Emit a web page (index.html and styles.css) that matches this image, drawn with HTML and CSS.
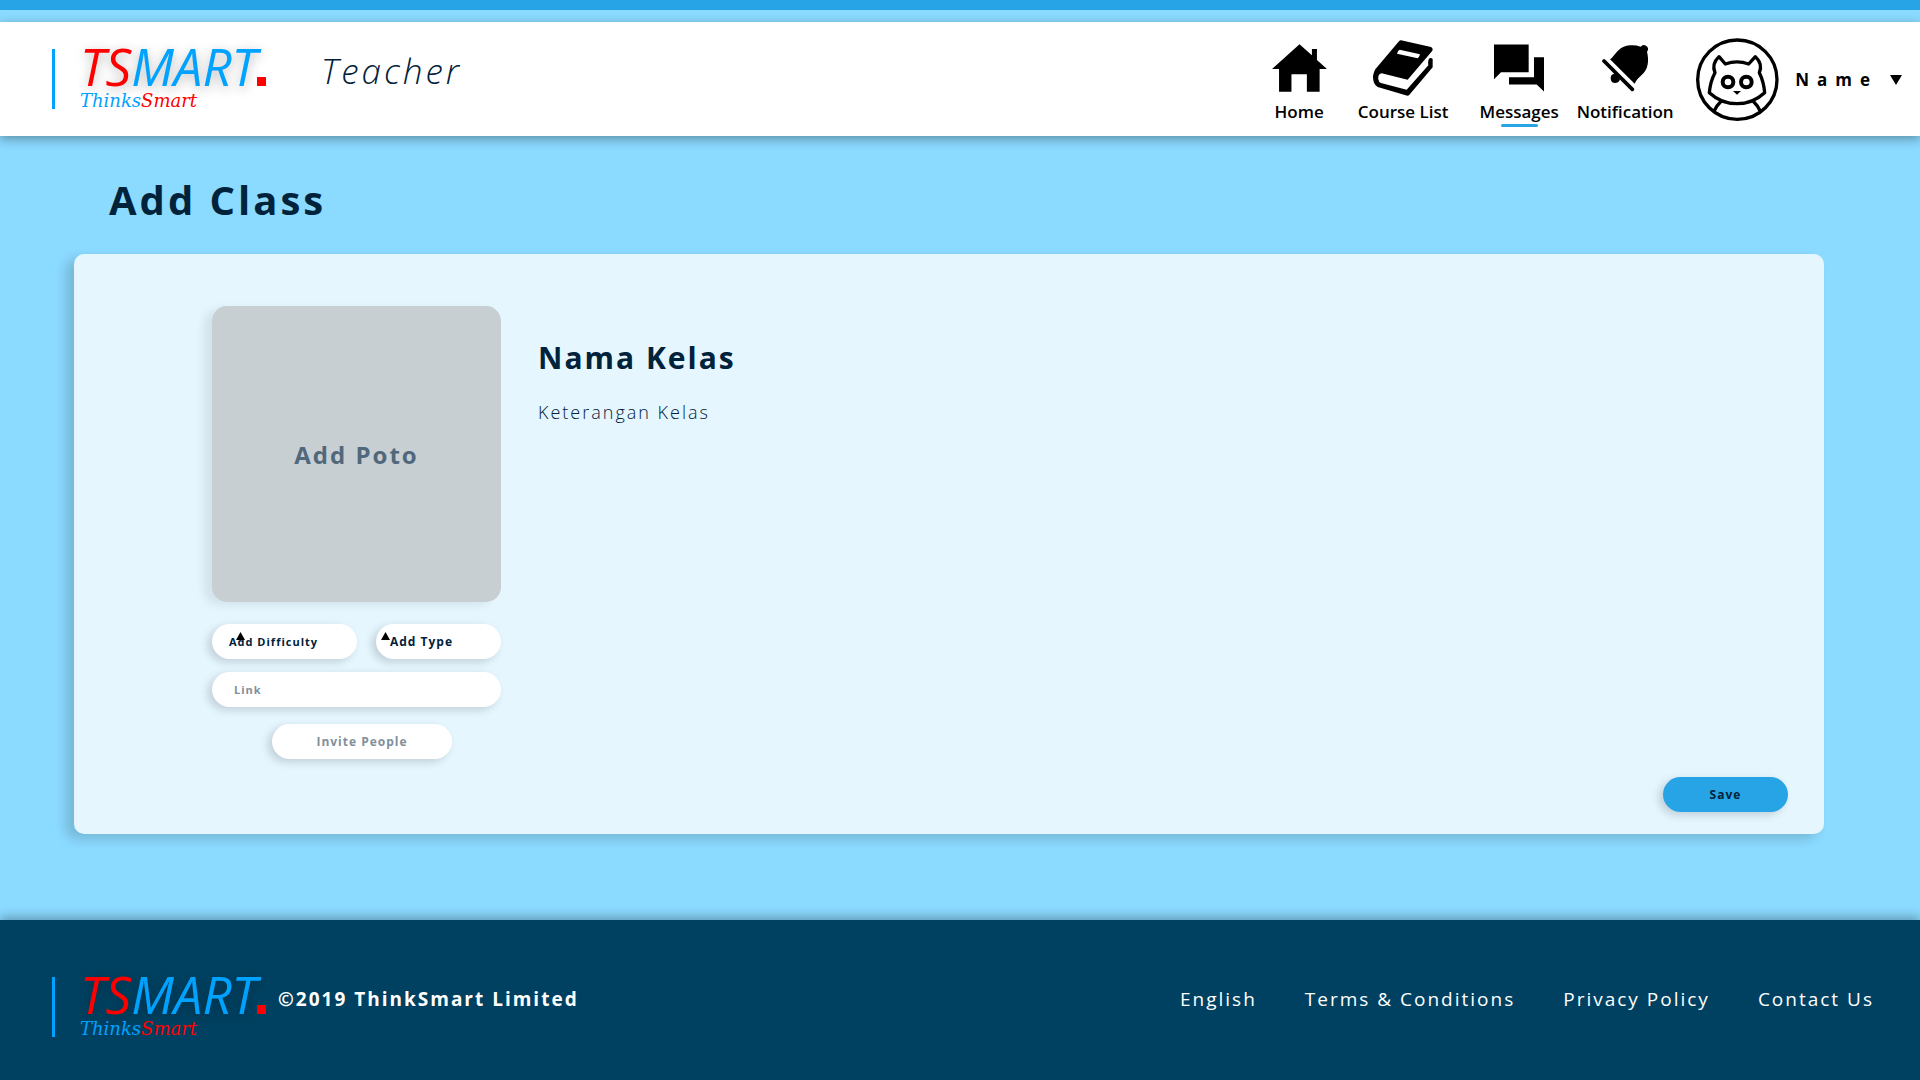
FILE: index.html
```html
<!DOCTYPE html>
<html lang="id">
<head>
<meta charset="utf-8">
<meta name="viewport" content="width=device-width, initial-scale=1">
<title>TSMART - Add Class</title>
<link rel="stylesheet" href="styles.css">
</head>
<body>
<header class="header">
  <a class="logo" href="#">
    <span class="logo-name"><span class="red">TS</span>MART<span class="logo-dot"></span></span>
    <span class="logo-sub">Thinks<span class="red">Smart</span></span>
  </a>
  <span class="role">Teacher</span>
  <nav class="nav">
    <a class="nav-item" href="#">
      <svg class="nav-icon" width="55" height="47" viewBox="0 0 164 142"><path d="M82 0 119 33V14h15v33l30 27h-22v68h-38V90H58v52H21V74H0z"/></svg>
      <span>Home</span>
    </a>
    <a class="nav-item" href="#">
      <svg class="nav-icon" width="60" height="56" viewBox="0 0 180 168"><path fill-rule="evenodd" d="M84 1 174 21Q181 24 178 32L104 119 26 100Q14 102 16 118 17 127 24 129L101 149 166 76Q164 62 168 56 174 52 179 57V82L108 166Q104 168 98 166L14 141Q0 133 0 110 2 92 12 82L76 6Q80 0 84 1ZM80 29Q75 30 72 41L134 55Q139 52 141 43Z"/></svg>
      <span>Course List</span>
    </a>
    <a class="nav-item active" href="#">
      <svg class="nav-icon" width="50" height="47" viewBox="0 0 150 141"><path d="M0 0h104v83H21L0 104zM120 38h30v103l-22-21H45V98h75z"/></svg>
      <span>Messages</span>
    </a>
    <a class="nav-item" href="#">
      <svg class="nav-icon" width="46" height="46" viewBox="0 0 138 138"><path d="M24 43C40 35 44 5 85 1Q102 0 116 5A11 11 0 1 1 135 20Q140 40 137 58C133 88 106 95 98 116z"/><path d="M38 84 54 100A14 14 0 1 1 38 86z"/><path d="M6 48 91 133" stroke="#000" stroke-width="11" stroke-linecap="round"/></svg>
      <span>Notification</span>
    </a>
  </nav>
  <button class="profile" type="button">
    <svg width="83" height="83" viewBox="0 0 249 249" fill="none" stroke="#000" stroke-width="10" stroke-linejoin="round"><circle cx="124" cy="125" r="119"/><path d="M69 56 88 78Q123 65 158 78L178 56Q201 78 190 104 203 130 206 164 170 197 123 197 76 197 40 164 43 130 57 104 46 78 69 56Z"/><circle cx="96" cy="132" r="16" stroke-width="12"/><circle cx="151" cy="132" r="16" stroke-width="12"/><path d="M111 159h24l-12 11z" fill="#000" stroke="none"/><path d="M76 189Q63 201 54 220M171 189Q184 201 193 220"/></svg>
    <span class="profile-name">Name</span>
    <svg width="12" height="10" viewBox="0 0 12 10"><path d="M0 0h12L6 10z"/></svg>
  </button>
</header>

<main class="main">
  <h1 class="title">Add Class</h1>
  <form class="panel">
    <div class="panel-body">
      <div class="media">
        <button class="photo" type="button">Add Poto</button>
        <div class="fields">
          <div class="pick pick-wide">
            <select class="pill" aria-label="Difficulty"><option>Add Difficulty</option></select>
            <svg class="caret" width="9" height="8" viewBox="0 0 18 16"><path d="M0 16h18L9 0z"/></svg>
          </div>
          <div class="pick">
            <select class="pill" aria-label="Type"><option>Add Type</option></select>
            <svg class="caret" width="9" height="8" viewBox="0 0 18 16"><path d="M0 16h18L9 0z"/></svg>
          </div>
        </div>
        <input class="pill link" type="text" placeholder="Link" aria-label="Link">
        <button class="pill invite" type="button">Invite People</button>
      </div>
      <div class="details">
        <h2 class="class-name">Nama Kelas</h2>
        <p class="class-info">Keterangan Kelas</p>
      </div>
    </div>
    <button class="pill save" type="submit">Save</button>
  </form>
</main>

<footer class="footer">
  <a class="logo" href="#">
    <span class="logo-name"><span class="red">TS</span>MART<span class="logo-dot"></span></span>
    <span class="logo-sub">Thinks<span class="red">Smart</span></span>
  </a>
  <span class="copyright">©2019 ThinkSmart Limited</span>
  <nav class="footer-links">
    <a href="#">English</a>
    <a href="#">Terms &amp; Conditions</a>
    <a href="#">Privacy Policy</a>
    <a href="#">Contact Us</a>
  </nav>
</footer>
</body>
</html>
```

FILE: styles.css
```css
* { box-sizing: border-box; }

body {
  margin: 0;
  min-height: 100vh;
  display: flex;
  flex-direction: column;
  border-top: 10px solid #27a4e6;
  background: #8bdaff;
  color: #00223a;
  font-family: "Open Sans", "Noto Sans", sans-serif;
}

a { color: inherit; text-decoration: none; }
h1, h2, p { margin: 0; }
button, input, select { font: inherit; color: inherit; border: 0; }
button { cursor: pointer; }

/* Header */
.header {
  display: flex;
  align-items: flex-start;
  height: 114px;
  margin-top: 12px;
  padding: 0 18px 0 52px;
  background: #fff;
  box-shadow: 0 3px 10px rgba(0, 0, 0, .35);
}

.logo {
  display: flex;
  flex-direction: column;
  width: 218px;
  height: 60px;
  margin-top: 27px;
  padding-left: 25px;
  border-left: 3px solid #00a2ff;
  color: #00a2ff;
  font-style: italic;
}

.logo-name {
  display: flex;
  align-items: baseline;
  font-size: 51px;
  line-height: 34px;
  text-shadow: 0 3px 12px rgba(0, 0, 0, .3);
}

.logo-dot { width: 9px; height: 9px; background: #f00; }

.logo-sub {
  margin-top: 4px;
  font-family: "DejaVu Serif", serif;
  font-size: 18px;
  line-height: 22px;
}

.red { color: #f00; }

.role {
  margin: 25px auto 0 51px;
  font-size: 35px;
  font-style: italic;
  font-weight: 300;
  line-height: 48px;
  letter-spacing: 3px;
}

.nav {
  display: grid;
  grid-template-columns: 84px 124px 108px 104px;
  margin-top: 16px;
  color: #000;
}

.nav-item {
  display: flex;
  flex-direction: column;
  align-items: center;
  font-size: 17px;
  font-weight: 600;
  line-height: 24px;
}

.nav-icon { height: 60px; }
.nav-item span { margin-top: 2px; }

.active::after {
  content: "";
  width: 37px;
  height: 3px;
  border-radius: 2px;
  background: #27a4e6;
}

.profile {
  display: flex;
  align-items: center;
  margin: 16px 0 0 19px;
  padding: 0;
  background: none;
  color: #000;
}

.profile-name {
  margin: 0 12px 0 16px;
  font-size: 17px;
  font-weight: 700;
  letter-spacing: 8px;
}

/* Main form */
.main { flex: 1; padding: 36px 96px 86px 74px; }

.title {
  margin-left: 35px;
  font-size: 40px;
  font-weight: 700;
  line-height: 56px;
  letter-spacing: 3px;
}

.panel {
  display: flex;
  flex-direction: column;
  justify-content: space-between;
  min-height: 580px;
  margin-top: 26px;
  padding: 52px 36px 22px 138px;
  border-radius: 10px;
  background: #e5f6ff;
  box-shadow: -8px 5px 12px rgba(0, 0, 0, .16);
}

.panel-body { display: flex; gap: 37px; }
.media { display: flex; flex-direction: column; width: 289px; }

.photo {
  height: 296px;
  border-radius: 15px;
  background: #c8cfd3;
  color: #50687b;
  font-size: 24px;
  font-weight: 700;
  letter-spacing: 2px;
  box-shadow: -8px 3px 10px rgba(0, 0, 0, .08);
}

.fields { display: flex; gap: 19px; margin-top: 22px; }
.pick { position: relative; width: 125px; }
.pick-wide { width: 145px; }

.pill {
  height: 35px;
  padding: 0 14px;
  border-radius: 18px;
  background: #fff;
  font-size: 12px;
  font-weight: 700;
  letter-spacing: 1px;
  box-shadow: -4px 3px 9px rgba(0, 0, 0, .16);
}

.pick .pill { width: 100%; appearance: none; }
.pick-wide .pill { padding-left: 17px; font-size: 11px; }

.caret { position: absolute; top: 8px; left: 5px; }
.pick-wide .caret { left: 24px; }

.link { margin-top: 13px; padding: 0 22px; font-size: 11px; }
.link::placeholder { color: #7f909c; opacity: 1; }

.invite {
  width: 180px;
  margin: 17px 0 0 60px;
  color: #7f909c;
}

.details { padding-top: 32px; }

.class-name {
  font-size: 30px;
  font-weight: 700;
  line-height: 40px;
  letter-spacing: 2px;
}

.class-info {
  margin-top: 21px;
  font-size: 18px;
  font-weight: 300;
  line-height: 26px;
  letter-spacing: 2px;
}

.save {
  align-self: flex-end;
  width: 125px;
  background: #27a4e6;
}

/* Footer */
.footer {
  display: flex;
  align-items: flex-start;
  height: 160px;
  padding: 30px 46px 0 52px;
  background: #004161;
  color: #fff;
  box-shadow: 0 -3px 10px rgba(0, 0, 0, .3);
}

.copyright {
  margin: 35px auto 0 8px;
  font-size: 19px;
  font-weight: 700;
  line-height: 28px;
  letter-spacing: 2px;
}

.footer-links {
  display: flex;
  gap: 48px;
  margin-top: 35px;
  font-size: 19px;
  line-height: 28px;
  letter-spacing: 2px;
}
```
